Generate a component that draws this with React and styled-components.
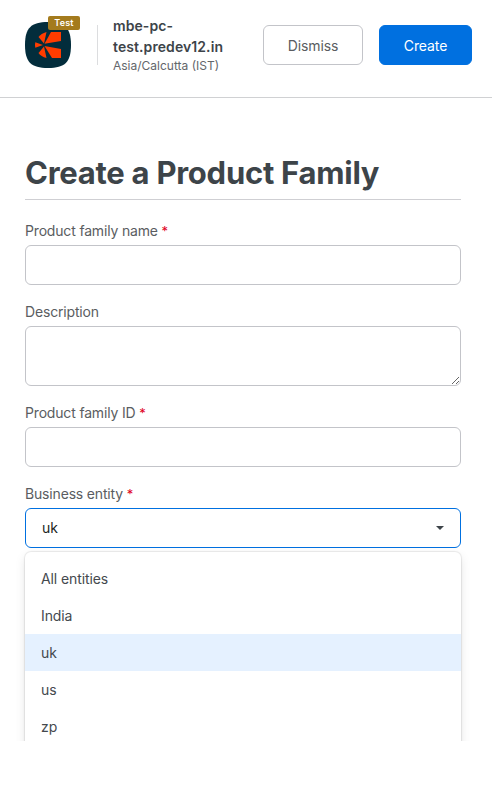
import React from 'react'
import styled, { createGlobalStyle } from 'styled-components'

const GlobalStyle = createGlobalStyle`
  * {
    box-sizing: border-box;
  }
  body {
    margin: 0;
    background: #fff;
    font-family: Inter, "Liberation Sans", sans-serif;
    font-size: 14px;
    color: #3d4449;
  }
`;

const Panel = styled.div`
  height: 741px;
  overflow: hidden;
`;

const Header = styled.header`
  display: flex;
  align-items: flex-start;
  height: 98px;
  padding: 15px 20px 0 25px;
  border-bottom: 1px solid #d0d1d3;
`;

const Brand = styled.div`
  position: relative;
  width: 46px;
  height: 46px;
  margin-top: 7px;

  svg {
    display: block;
  }
`;

const Badge = styled.span`
  position: absolute;
  top: -6px;
  left: 23px;
  width: 32px;
  height: 14px;
  border-radius: 2px;
  background: #a47b1d;
  color: #fff;
  font-size: 9px;
  font-weight: 600;
  line-height: 14px;
  letter-spacing: 0.2px;
  text-align: center;
`;

const Divider = styled.div`
  width: 1px;
  height: 40px;
  margin: 10px 15px 0 26px;
  background: #dcdddf;
`;

const Site = styled.div`
  flex: 1;
`;

const SiteName = styled.div`
  width: 120px;
  font-size: 14px;
  font-weight: 600;
  line-height: 21px;
  letter-spacing: 0.08px;
`;

const TimeZone = styled.div`
  margin-top: 1px;
  font-size: 12px;
  line-height: 16px;
  color: #63666b;
`;

const Actions = styled.div`
  display: flex;
  gap: 16px;
  margin-top: 10px;
`;

const Button = styled.button`
  width: ${({ $primary }) => ($primary ? '93px' : '100px')};
  height: 40px;
  padding: 0;
  border: 1px solid ${({ $primary }) => ($primary ? '#0070e0' : '#c3c4c9')};
  border-radius: 6px;
  background: ${({ $primary }) => ($primary ? '#0070e0' : '#fff')};
  color: ${({ $primary }) => ($primary ? '#fff' : '#5a5d61')};
  font-family: inherit;
  font-size: 14px;
  letter-spacing: -0.1px;
`;

const Form = styled.form`
  padding: 54px 31px 0 25px;
`;

const Title = styled.h1`
  height: 48px;
  margin: 0 0 21px;
  border-bottom: 1px solid #cfcfd3;
  font-size: 31px;
  font-weight: 700;
  line-height: 42px;
  letter-spacing: -0.26px;
`;

const Field = styled.div`
  display: flex;
  flex-direction: column;
  margin-bottom: 17px;
`;

const Label = styled.label`
  height: 24px;
  color: #5a5d61;
  line-height: 20px;
  letter-spacing: -0.17px;
`;

const Required = styled.span`
  color: #e0001b;
  font-size: 13px;
`;

const Input = styled.input`
  height: 40px;
  padding: 0 16px;
  border: 1px solid #c3c4c9;
  border-radius: 6px;
  font: inherit;
`;

const TextArea = styled.textarea`
  height: 60px;
  padding: 8px 16px;
  border: 1px solid #c3c4c9;
  border-radius: 6px;
  font: inherit;
  resize: vertical;
`;

const Select = styled.div`
  position: relative;
  display: flex;
  align-items: center;
  justify-content: space-between;
  height: 40px;
  padding: 0 16px;
  border: 1px solid #0070e0;
  border-radius: 6px;
  color: #1d1f22;
  line-height: 18px;
  letter-spacing: -0.1px;
`;

const Caret = styled.span`
  border: 4px solid transparent;
  border-top-color: #3d4449;
  border-bottom: 0;
`;

const Menu = styled.ul`
  position: absolute;
  top: 43px;
  left: -1px;
  right: -1px;
  height: 230px;
  margin: 0;
  padding: 8px 0;
  border-radius: 6px;
  background: #fff;
  box-shadow: 0 0 1px 1px rgba(0, 0, 0, 0.08), 0 4px 11px rgba(0, 0, 0, 0.1);
  list-style: none;
`;

const Option = styled.li`
  height: 37px;
  padding: 0 16px;
  background: ${({ $selected }) => ($selected ? '#e5f1ff' : 'transparent')};
  color: #44494e;
  line-height: 37px;
`;

const entities = ['All entities', 'India', 'uk', 'us', 'zp']

function Logo() {
  return (
    <svg width="46" height="46" viewBox="0 0 46 46">
      <path d="M23 0C40 0 46 6 46 23S40 46 23 46 0 40 0 23 6 0 23 0Z" fill="#032d3c" />
      <g fill="#ff3c00">
        <path d="M19.500 21.800L26 10H36V19Z" />
        <path d="M19.500 24L36 27V36H27Z" />
        <path d="M19 21.500L13.500 15Q16 11.500 21.500 10Z" />
        <path d="M19 24.500L13.500 31Q16 34.500 21.500 36Z" />
        <path d="M18 23L10.300 20.300Q9.600 23 10.300 25.700Z" />
      </g>
    </svg>
  )
}

function App() {
  return (
    <>
      <GlobalStyle />
      <Panel>
        <Header>
          <Brand>
            <Logo />
            <Badge>Test</Badge>
          </Brand>
          <Divider />
          <Site>
            <SiteName>mbe-pc-test.predev12.in</SiteName>
            <TimeZone>Asia/Calcutta (IST)</TimeZone>
          </Site>
          <Actions>
            <Button>Dismiss</Button>
            <Button $primary>Create</Button>
          </Actions>
        </Header>
        <Form>
          <Title>Create a Product Family</Title>
          <Field>
            <Label htmlFor="name">Product family name <Required>*</Required></Label>
            <Input id="name" />
          </Field>
          <Field>
            <Label htmlFor="description">Description</Label>
            <TextArea id="description" />
          </Field>
          <Field>
            <Label htmlFor="familyId">Product family ID <Required>*</Required></Label>
            <Input id="familyId" />
          </Field>
          <Field>
            <Label>Business entity <Required>*</Required></Label>
            <Select>
              uk
              <Caret />
              <Menu>
                {entities.map((name) => (
                  <Option key={name} $selected={name === 'uk'}>{name}</Option>
                ))}
              </Menu>
            </Select>
          </Field>
        </Form>
      </Panel>
    </>
  )
}

export default App
